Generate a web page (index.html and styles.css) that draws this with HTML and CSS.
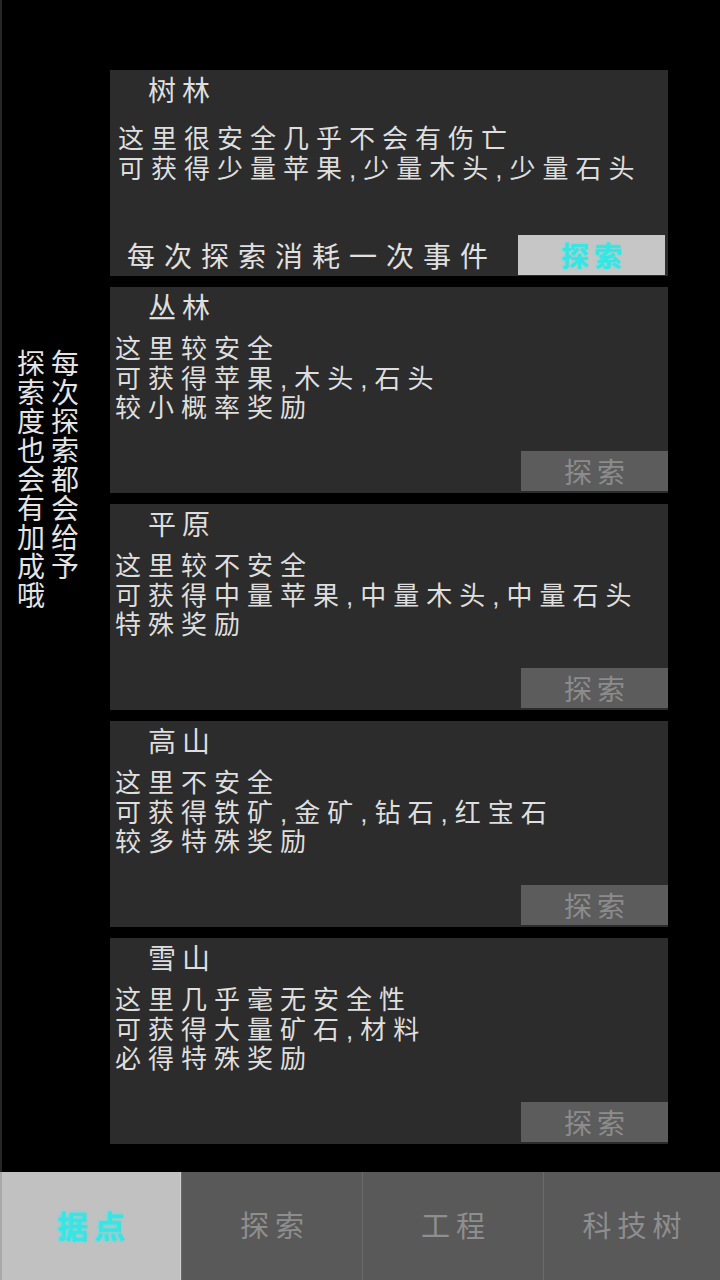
FILE: index.html
```html
<!DOCTYPE html>
<html lang="zh-CN">
<head>
  <meta charset="UTF-8" />
  <meta name="viewport" content="width=device-width, initial-scale=1.0" />
  <title>探索</title>
  <link rel="stylesheet" href="styles.css">
</head>
<body>
  <div class="main">
    <div class="side">
      <div class="side-tip">每次探索都会给予<br>探索度也会有加成哦</div>
    </div>

    <div class="area-list">
      <div class="card first">
        <div class="card-title">树林</div>
        <div class="card-desc">
          <div>这里很安全几乎不会有伤亡</div>
          <div>可获得少量苹果,少量木头,少量石头</div>
        </div>
        <div class="card-foot">
          <span class="cost">每次探索消耗一次事件</span>
          <button class="explore-btn active">探索</button>
        </div>
      </div>

      <div class="card">
        <div class="card-title">丛林</div>
        <div class="card-desc">
          <div>这里较安全</div>
          <div>可获得苹果,木头,石头</div>
          <div>较小概率奖励</div>
        </div>
        <div class="card-foot">
          <button class="explore-btn">探索</button>
        </div>
      </div>

      <div class="card">
        <div class="card-title">平原</div>
        <div class="card-desc">
          <div>这里较不安全</div>
          <div>可获得中量苹果,中量木头,中量石头</div>
          <div>特殊奖励</div>
        </div>
        <div class="card-foot">
          <button class="explore-btn">探索</button>
        </div>
      </div>

      <div class="card">
        <div class="card-title">高山</div>
        <div class="card-desc">
          <div>这里不安全</div>
          <div>可获得铁矿,金矿,钻石,红宝石</div>
          <div>较多特殊奖励</div>
        </div>
        <div class="card-foot">
          <button class="explore-btn">探索</button>
        </div>
      </div>

      <div class="card">
        <div class="card-title">雪山</div>
        <div class="card-desc">
          <div>这里几乎毫无安全性</div>
          <div>可获得大量矿石,材料</div>
          <div>必得特殊奖励</div>
        </div>
        <div class="card-foot">
          <button class="explore-btn">探索</button>
        </div>
      </div>
    </div>
  </div>

  <div class="tabbar">
    <div class="tab active">据点</div>
    <div class="tab">探索</div>
    <div class="tab">工程</div>
    <div class="tab">科技树</div>
  </div>
</body>
</html>
```

FILE: styles.css
```css
body {
  margin: 0;
  padding: 0;
  background: #000;
  color: #dedede;
  font-family: "Noto Sans CJK SC", "Noto Sans", sans-serif;
  width: 720px;
  height: 1280px;
  display: flex;
  flex-direction: column;
  overflow: hidden;
}

.main {
  height: 1172px;
  display: flex;
  border-left: 2px solid #262626;
  box-sizing: border-box;
}

.side {
  width: 108px;
  flex-shrink: 0;
  display: flex;
  justify-content: center;
  padding-top: 349px;
  box-sizing: border-box;
}

.side-tip {
  writing-mode: vertical-rl;
  font-size: 28px;
  line-height: 34px;
  letter-spacing: 1px;
  height: 270px;
  color: #e4e4e4;
  margin-left: -16px;
}

.area-list {
  width: 558px;
  padding-top: 70px;
  display: flex;
  flex-direction: column;
  gap: 11px;
}

.card {
  height: 206px;
  background: #2c2c2c;
  display: flex;
  flex-direction: column;
  box-sizing: border-box;
  padding-top: 4px;
}

.card-title {
  font-size: 28px;
  line-height: 30px;
  letter-spacing: 6px;
  padding-left: 38px;
}

.card-desc {
  font-family: "Liberation Sans", "Noto Sans CJK SC", sans-serif;
  font-size: 26px;
  letter-spacing: 7px;
  padding-left: 5px;
  margin-top: 14px;
  white-space: nowrap;
}

.card-desc div {
  height: 29.5px;
  line-height: 29.5px;
}

.card.first .card-desc {
  margin-top: 21px;
  padding-left: 8px;
}

.card-foot {
  margin-top: auto;
  display: flex;
  align-items: center;
  justify-content: flex-end;
  padding-bottom: 2px;
}

.card.first .card-foot {
  justify-content: space-between;
  padding-right: 3px;
  padding-bottom: 1px;
}

.cost {
  font-size: 28px;
  letter-spacing: 9px;
  padding-left: 17px;
  color: #e0e0e0;
}

.explore-btn {
  width: 147px;
  height: 40px;
  border: none;
  border-radius: 0;
  background: #5c5c5c;
  color: #8c8c8c;
  font-family: inherit;
  font-size: 28px;
  letter-spacing: 5px;
  padding: 0 0 0 5px;
  line-height: 40px;
}

.explore-btn.active {
  background: #c6c6c6;
  color: #34e6e4;
  font-weight: bold;
  text-shadow: 0 0 2px #45e8e6;
}

.tabbar {
  height: 108px;
  display: grid;
  grid-template-columns: 181px 181px 181px 1fr;
}

.tab {
  background: #595959;
  border-left: 1px solid #6b6b6b;
  color: #8e8e8e;
  font-size: 29px;
  letter-spacing: 6px;
  padding-left: 6px;
  display: flex;
  align-items: center;
  justify-content: center;
  padding-bottom: 4px;
}

.tab.active {
  background: #c1c1c1;
  border-left: 2px solid #a9a9a9;
  border-right: 1px solid #d0d0d0;
  color: #36e6e6;
  font-weight: bold;
  font-size: 31px;
  text-shadow: 0 0 3px #3de8e6;
}
```
